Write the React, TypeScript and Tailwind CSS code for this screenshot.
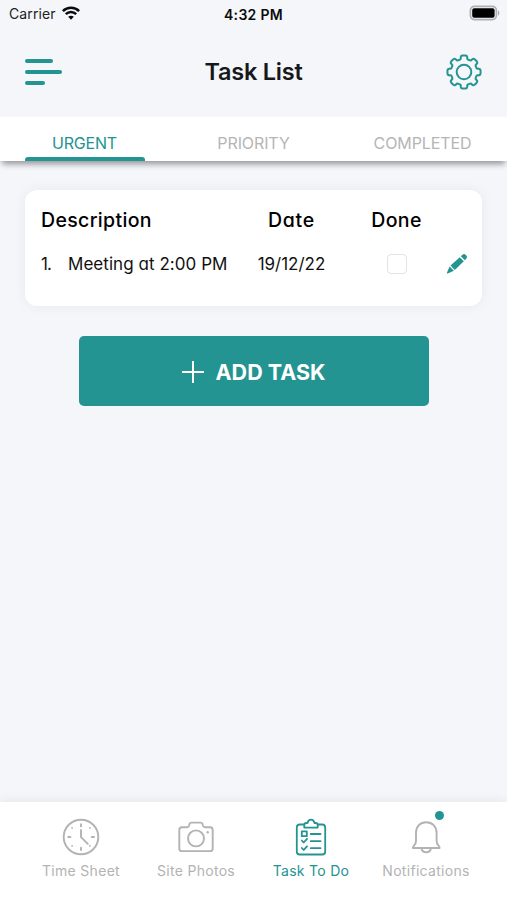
import { useState } from "react";
import clsx from "clsx";

const TABS = [
  { id: "urgent", label: "URGENT", tracking: "tracking-[-0.2px]" },
  { id: "priority", label: "PRIORITY", tracking: "tracking-[-0.1px]" },
  { id: "completed", label: "COMPLETED", tracking: "tracking-[-0.1px]" },
];

const TASKS = [{ id: 1, title: "Meeting at 2:00 PM", date: "19/12/22" }];

const NAV_ITEMS = [
  { id: "time", label: "Time Sheet", Icon: ClockIcon },
  { id: "photos", label: "Site Photos", Icon: CameraIcon },
  { id: "tasks", label: "Task To Do", Icon: ClipboardIcon },
  { id: "notifications", label: "Notifications", Icon: BellIcon, badge: true },
];

// eight rounded teeth around the centre of a 36x36 box
function gearPath() {
  const at = (r: number, deg: number) => {
    const a = ((deg - 90) * Math.PI) / 180;
    return `${(18 + r * Math.cos(a)).toFixed(2)} ${(18 + r * Math.sin(a)).toFixed(2)}`;
  };
  let d = `M${at(13.1, -17.5)}`;
  for (let i = 0; i < 8; i++) {
    const t = i * 45;
    d += `Q${at(13.3, t - 13)} ${at(14.7, t - 12.5)}`;
    d += `Q${at(16.7, t - 12)} ${at(16.6, t - 5)}`;
    d += `L${at(16.6, t + 5)}`;
    d += `Q${at(16.7, t + 12)} ${at(14.7, t + 12.5)}`;
    d += `Q${at(13.3, t + 13)} ${at(13.1, t + 17.5)}`;
    d += `Q${at(13.1, t + 22.5)} ${at(13.1, t + 27.5)}`;
  }
  return d + "Z";
}

const GEAR = gearPath();

function GearIcon() {
  return (
    <svg width="36" height="36" viewBox="0 0 36 36" fill="none" stroke="#239491" strokeWidth="2">
      <path d={GEAR} strokeLinejoin="round" />
      <circle cx="18" cy="18" r="7.3" />
    </svg>
  );
}

function ClockIcon() {
  return (
    <svg width="38" height="38" viewBox="0 0 38 38" fill="none" stroke="currentColor" strokeWidth="1.9" strokeLinecap="round">
      <circle cx="19" cy="19" r="17.300" />
      <path d="M19 12v7.200l6.800 6.700" />
      <path d="M19 6.200v2.200M19 29.800v2.200M6.200 19h2.200M29.800 19H32" />
      <path d="M10 9.800l.2.200M28 9.800l-.2.200M10 28l.2-.2M28 28l-.2-.2" strokeWidth="1.700" />
    </svg>
  );
}

function CameraIcon() {
  return (
    <svg width="38" height="38" viewBox="0 0 38 38" fill="none" stroke="currentColor" strokeWidth="1.900" strokeLinejoin="round">
      <path d="M5 9.200h5.200c1 0 1.500-.5 1.800-1.400l.5-1.700c.3-1 .9-1.500 1.900-1.500h9.200c1 0 1.600.5 1.900 1.500l.5 1.700c.3.900.8 1.400 1.800 1.400H33c1.700 0 2.700 1 2.700 2.700v18.500c0 1.700-1 2.700-2.700 2.700H5c-1.700 0-2.700-1-2.700-2.700V11.900c0-1.700 1-2.700 2.700-2.700z" />
      <circle cx="19" cy="20.400" r="8" />
      <circle cx="30.700" cy="14.200" r="1.200" fill="currentColor" stroke="none" />
    </svg>
  );
}

function ClipboardIcon() {
  return (
    <svg width="38" height="38" viewBox="0 0 38 38" fill="none" stroke="currentColor" strokeWidth="1.800" strokeLinecap="round" strokeLinejoin="round">
      <path d="M12 6.500H7.800c-2 0-3 1-3 3V33.500c0 2 1 3 3 3h22.400c2 0 3-1 3-3V9.500c0-2-1-3-3-3H26" />
      <path d="M12.300 9.600V7c0-1.400.6-2 2-2h1.200c.5-2.200 1.800-3.400 3.500-3.400s3 1.200 3.500 3.400h1.200c1.400 0 2 .6 2 2v2.600z" />
      <path d="M9.800 13.400h5v4.800h-5zM9.800 22.500l1.900 2 3.300-3.700M9.800 30l1.900 2 3.300-3.700" />
      <path d="M18.800 16h9.700M18.800 23.200h9.700M18.800 30.200h9.700" />
    </svg>
  );
}

function BellIcon() {
  return (
    <svg width="38" height="38" viewBox="0 0 38 38" fill="none" stroke="currentColor" strokeWidth="1.900" strokeLinejoin="round">
      <path d="M9 23V15C9 8.500 13.200 4.200 19.200 4.200S29.600 8.500 29.600 15v8c0 2.200.8 3.300 1.900 4.600.8.900 1.300 1.300 1.100 2.400H5.900c-.2-1.100.3-1.500 1.100-2.400C8.200 26.300 9 25.200 9 23z" />
      <path d="M14.500 30.500c.5 2.500 2.400 3.800 4.700 3.800s4.200-1.300 4.700-3.800" />
    </svg>
  );
}

function StatusBar() {
  return (
    <div className="grid h-[27px] grid-cols-3 items-center px-[9px] text-[14px] text-[#202124]">
      <div className="flex items-center gap-[6px]">
        <span className="tracking-[0.1px]">Carrier</span>
        <svg className="-mt-[2px]" width="18" height="14" viewBox="0 0 18 14" fill="none" stroke="#0b0b0c" strokeWidth="2.500">
          <path d="M.9 5.100C5.300.6 12.700.6 17.100 5.100" />
          <path d="M3.800 8.200c2.900-2.900 7.500-2.900 10.400 0" />
          <path d="M9 13.700L6.200 10.800c1.600-1.400 4-1.400 5.600 0z" fill="#0b0b0c" stroke="none" />
        </svg>
      </div>
      <span className="pt-px text-center text-[14px] font-semibold tracking-[0.300px] text-[#0b0b0c]">4:32 PM</span>
      <div className="flex justify-end">
        <svg className="-mt-px -mr-[2px]" width="31" height="16" viewBox="0 0 31 16">
          <rect x="1.400" y="1.400" width="26" height="13.200" rx="4" fill="#f4f6fa" stroke="#aeb0b3" strokeWidth="1.700" />
          <rect x="3.200" y="3.200" width="22.400" height="9.600" rx="2" fill="#000" />
          <path d="M29 5.200c1.800.8 1.800 4.600 0 5.400z" fill="#aeb0b3" />
        </svg>
      </div>
    </div>
  );
}

export default function App() {
  const [tab, setTab] = useState("urgent");
  const [done, setDone] = useState<number[]>([]);

  const toggle = (id: number) =>
    setDone((prev) => (prev.includes(id) ? prev.filter((x) => x !== id) : [...prev, id]));

  return (
    <div className="flex h-[900px] w-full flex-col overflow-hidden bg-[#f4f6fa] font-['Inter',sans-serif] whitespace-nowrap">
      <StatusBar />

      <header className="grid h-[90px] grid-cols-[1fr_auto_1fr] items-center px-[25px] pb-px">
        <button type="button" aria-label="Menu" className="flex flex-col gap-[7px]">
          <span className="h-1 w-7 rounded-full bg-[#239491]" />
          <span className="h-1 w-[37px] rounded-full bg-[#239491]" />
          <span className="h-1 w-5 rounded-full bg-[#239491]" />
        </button>
        <h1 className="text-[23.500px] font-semibold tracking-[-0.250px] text-[#17181a]">Task List</h1>
        <button type="button" aria-label="Settings" className="justify-self-end">
          <GearIcon />
        </button>
      </header>

      <nav className="z-10 grid h-11 shrink-0 grid-cols-3 bg-white shadow-[0_5px_6px_-2px_rgba(0,0,0,0.4)]">
        {TABS.map((t) => (
          <button
            key={t.id}
            type="button"
            onClick={() => setTab(t.id)}
            className={clsx(
              "flex flex-col items-center justify-end text-[16px]",
              t.tracking,
              t.id === tab ? "text-[#239491]" : "text-[#b5b5b5]",
            )}
          >
            <span className="mb-[2px] leading-6">{t.label}</span>
            <span className={clsx("h-1 w-[120px] rounded-t-[3px]", t.id === tab && "bg-[#239491]")} />
          </button>
        ))}
      </nav>

      <main className="flex flex-1 flex-col items-center px-[25px] pt-[29px] [font-feature-settings:'cv11','ss03']">
        <section className="h-[116px] w-full rounded-xl bg-white pt-4 shadow-[0_0_14px_rgba(0,0,0,0.06)]">
          <div className="grid grid-cols-[195px_111px_99px_1fr] pl-4 text-[19.500px] leading-7 font-medium text-black">
            <span className="tracking-[0.350px]">Description</span>
            <span className="text-center tracking-[0.700px]">Date</span>
            <span className="text-center tracking-[0.400px]">Done</span>
          </div>
          {TASKS.map((task) => (
            <div
              key={task.id}
              className="mt-4 grid grid-cols-[27px_168px_111px_99px_1fr] items-center pl-4 text-[17px] leading-7 text-[#111]"
            >
              <span className="tracking-[-1px]">{task.id}.</span>
              <span className="tracking-[0.050px]">{task.title}</span>
              <span className="text-center">{task.date}</span>
              <button
                type="button"
                aria-label="Done"
                onClick={() => toggle(task.id)}
                className={clsx(
                  "size-5 justify-self-center rounded-[4px] border-[1.500px] border-[#e2e2e3]",
                  done.includes(task.id) && "bg-[#239491]",
                )}
              />
              <svg width="22" height="22" viewBox="0 0 22 22" fill="#239491">
                <path d="M3.600 13.500l4.300 4.300-6.200 2.700c-.6.200-1-.2-.8-.8z" />
                <path d="M4.500 12.500L13.800 4.200l4 4-9 8.700z" />
                <path d="M14.800 3.300l1.700-1.600c.9-.9 2.200-.8 3.100.1l.7.7c.9.900.9 2.200.1 3.100l-1.600 1.700z" />
              </svg>
            </div>
          ))}
        </section>

        <button
          type="button"
          className="mt-[30px] flex h-[70px] w-[350px] items-center justify-center gap-[12px] rounded-[5px] bg-[#239491] pt-[2px] text-[21.500px] font-bold text-white"
        >
          <svg width="22" height="22" viewBox="0 0 22 22" stroke="white" strokeWidth="2">
            <path d="M11 0v22M0 11h22" />
          </svg>
          ADD TASK
        </button>
      </main>

      <footer className="grid h-[98px] shrink-0 grid-cols-[115px_115px_115px_115px] justify-center bg-white shadow-[0_-2px_10px_rgba(0,0,0,0.06)]">
        {NAV_ITEMS.map(({ id, label, Icon, badge }) => (
          <button
            key={id}
            type="button"
            className={clsx(
              "flex flex-col items-center pt-[16px] text-[14px] tracking-[0.300px]",
              id === "tasks" ? "text-[#239491]" : "text-[#b3b3b3]",
            )}
          >
            <span className="relative">
              <Icon />
              {badge && <span className="absolute -top-[7px] left-[28px] size-[9px] rounded-full bg-[#239491]" />}
            </span>
            <span className="mt-[5px] leading-5">{label}</span>
          </button>
        ))}
      </footer>
    </div>
  );
}
